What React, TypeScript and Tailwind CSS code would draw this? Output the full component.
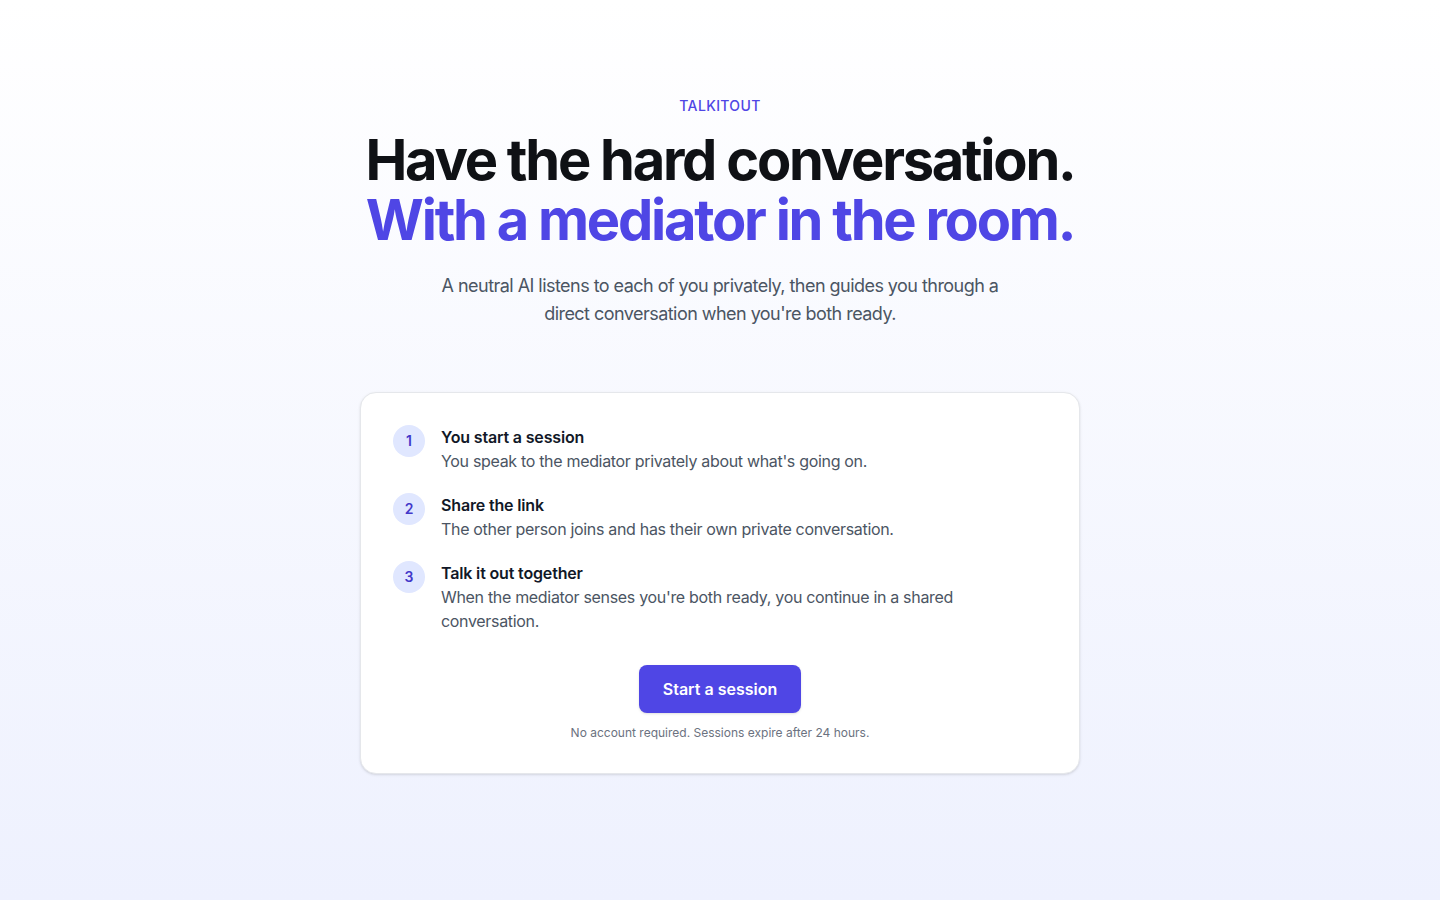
const steps = [
  {
    n: 1,
    title: "You start a session",
    body: "You speak to the mediator privately about what's going on.",
  },
  {
    n: 2,
    title: "Share the link",
    body: "The other person joins and has their own private conversation.",
  },
  {
    n: 3,
    title: "Talk it out together",
    body: "When the mediator senses you're both ready, you continue in a shared conversation.",
  },
];

export default function App() {
  return (
    <div
      className="min-h-screen bg-gradient-to-b from-white to-[#eef1fe] text-[#111827]"
      style={{ fontFamily: "Inter, 'Noto Sans', sans-serif" }}
    >
      <main className="mx-auto flex max-w-[720px] flex-col items-center pb-24 pt-24">
        <p className="text-sm font-medium tracking-wide text-[#4f46e5]">TALKITOUT</p>
        <h1 className="mt-[14px] flex flex-col items-center whitespace-nowrap text-center text-[56px] font-bold leading-[60px] tracking-[-0.04em] text-[#0f1115]">
          <span>Have the hard conversation.</span>
          <span className="text-[#4f46e5]">With a mediator in the room.</span>
        </h1>
        <p className="mt-[22px] max-w-[576px] text-center text-lg leading-7 tracking-[-0.03em] text-[#4b5563]">
          A neutral AI listens to each of you privately, then guides you through a direct
          conversation when you're both ready.
        </p>

        <div className="mt-16 w-full rounded-2xl border border-[#e5e7eb] bg-white p-8 shadow-sm">
          <ol className="flex flex-col gap-5">
            {steps.map((s) => (
              <li key={s.n} className="flex gap-4">
                <span className="flex h-8 w-8 shrink-0 items-center justify-center rounded-full bg-[#e0e7ff] text-sm font-semibold text-[#4338ca]">
                  {s.n}
                </span>
                <div>
                  <h3 className="text-base font-semibold leading-6 tracking-[-0.01em] text-[#111827]">
                    {s.title}
                  </h3>
                  <p className="text-base leading-6 tracking-[-0.02em] text-[#4b5563]">{s.body}</p>
                </div>
              </li>
            ))}
          </ol>

          <div className="mt-8 flex flex-col items-center">
            <button className="rounded-lg bg-[#4f46e5] px-6 py-3 text-base font-semibold text-white shadow-sm">
              Start a session
            </button>
            <p className="mt-3 text-xs text-[#6b7280]">
              No account required. Sessions expire after 24 hours.
            </p>
          </div>
        </div>
      </main>
    </div>
  );
}
